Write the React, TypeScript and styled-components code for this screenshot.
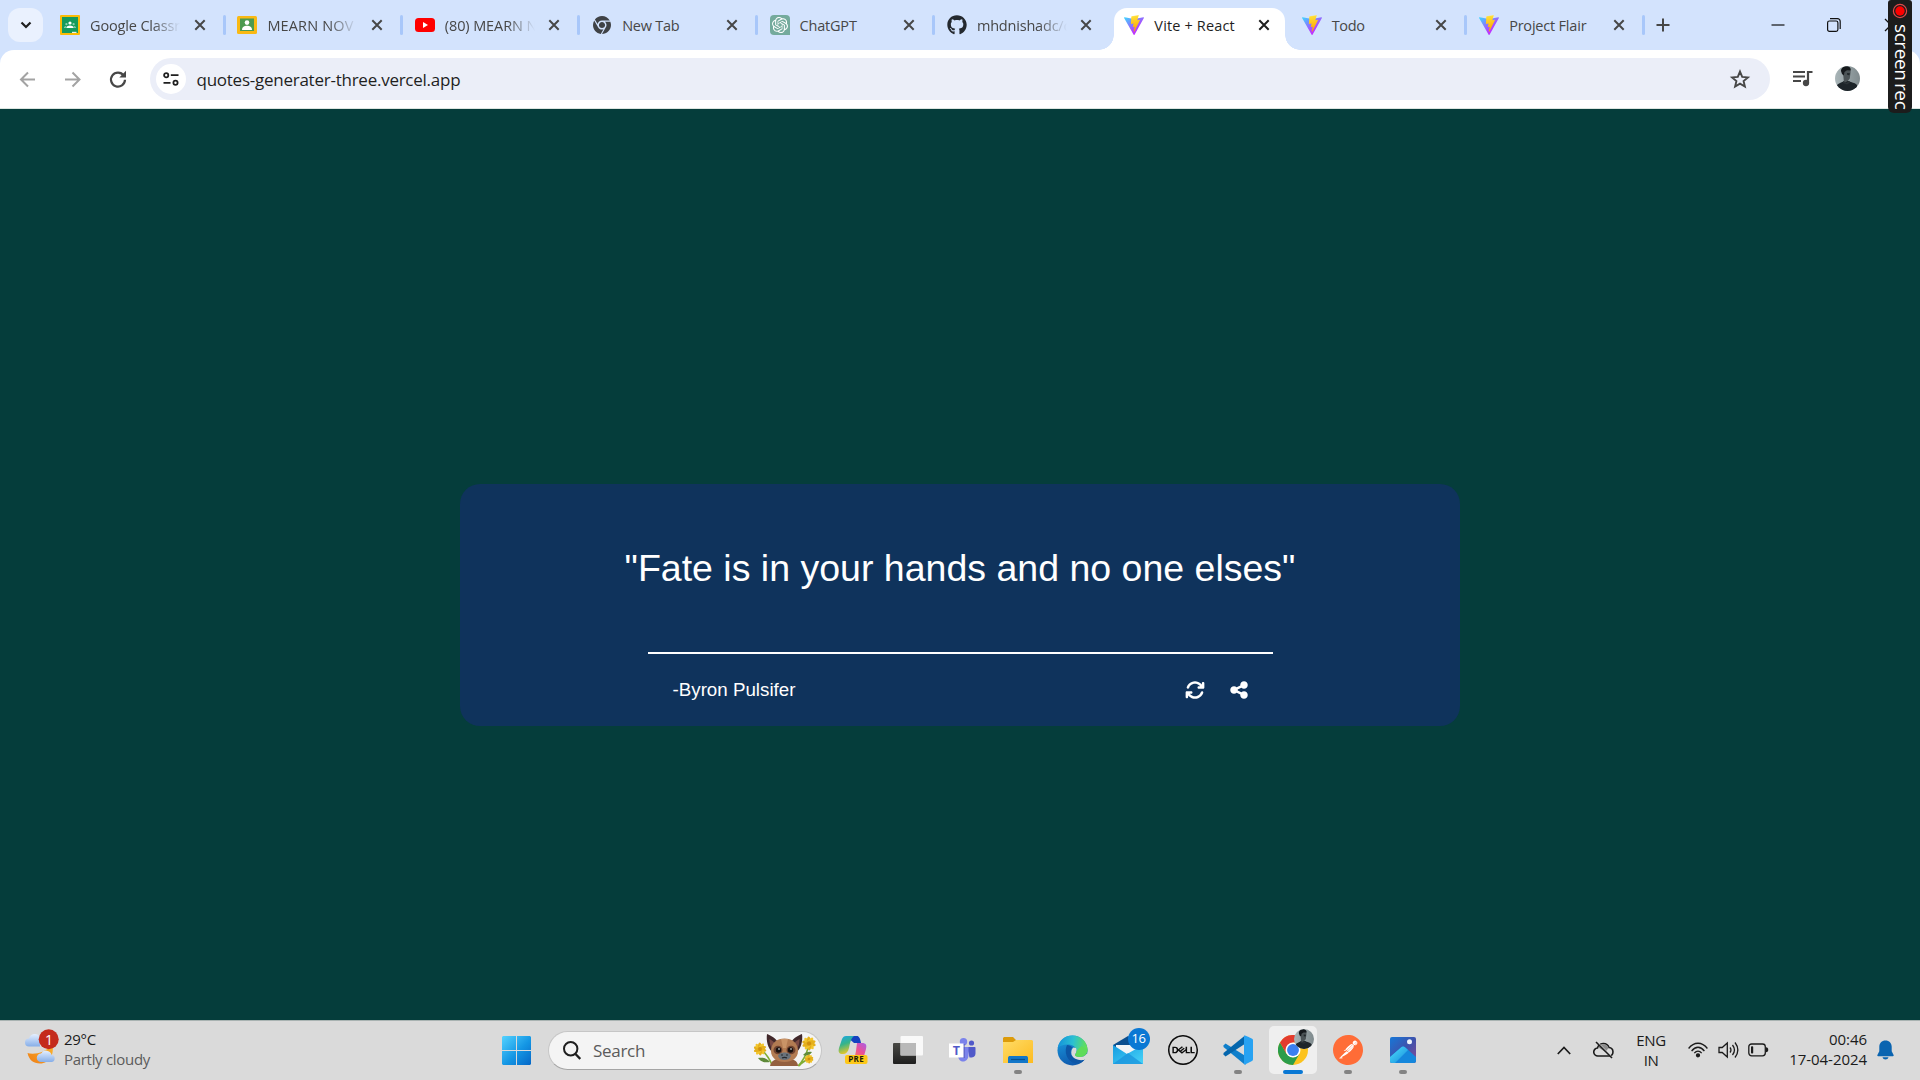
import React from "react";
import styled, { createGlobalStyle, css } from "styled-components";
import { FaGithub } from "react-icons/fa";
import { FaArrowsRotate, FaShareNodes, FaChrome } from "react-icons/fa6";
import { SiOpenai, SiDell, SiPostman } from "react-icons/si";

const uiFont = `"Segoe UI", "Open Sans", "Noto Sans", sans-serif`;

const GlobalStyle = createGlobalStyle`
  *, *::before, *::after { box-sizing: border-box; }
  body { margin: 0; background: #053d3b; overflow: hidden; }
  svg { display: block; flex: none; }
`;

const Screen = styled.div`
  position: relative;
  display: flex;
  flex-direction: column;
  width: 1920px;
  height: 1080px;
  overflow: hidden;
  background: #d3e3fd;
  font-family: ${uiFont};
`;

/* ---------- tab strip ---------- */
const TabStrip = styled.header`
  display: flex;
  flex: none;
  height: 50px;
  padding-left: 8px;
  background: #d3e3fd;
`;

const TabSearch = styled.button`
  display: grid;
  place-items: center;
  width: 35px;
  height: 34px;
  margin: 8px 7px 0 0;
  padding: 0;
  border: 0;
  border-radius: 12px;
  background: #eaf1fe;
`;

const TabCell = styled.div<{ $active?: boolean }>`
  position: relative;
  display: flex;
  align-items: center;
  width: 177.4px;
  height: 42px;
  margin-top: 8px;
  padding: 0 0 8px 10px;
  color: ${(p) => (p.$active ? "#1f1f1f" : "#474747")};
  ${(p) =>
    p.$active &&
    css`
      width: 171px;
      margin-right: 6.4px;
      border-radius: 13px 13px 0 0;
      background: #fff;
      &::before,
      &::after {
        content: "";
        position: absolute;
        bottom: 0;
        width: 15px;
        height: 15px;
      }
      &::before {
        left: -15px;
        background: radial-gradient(circle at 0 0, transparent 14.5px, #fff 15px);
      }
      &::after {
        right: -15px;
        background: radial-gradient(circle at 100% 0, transparent 14.5px, #fff 15px);
      }
    `}
`;

const Favicon = styled.span`
  display: grid;
  place-items: center;
  width: 20px;
  height: 20px;
  margin-right: 10px;
`;

const TabTitle = styled.span<{ $fade?: boolean; $spacing?: number }>`
  width: 90px;
  margin-right: 11.5px;
  padding-top: 1px;
  white-space: nowrap;
  font-size: 14.5px;
  line-height: 20px;
  letter-spacing: ${(p) => p.$spacing ?? -0.2}px;
  ${(p) => p.$fade && css`mask-image: linear-gradient(to right, #000 62px, transparent 90px);`}
`;

const Separator = styled.i`
  width: 3px;
  height: 20px;
  margin-left: 15px;
  border-radius: 2px;
  background: #a8c7fa;
`;

const NewTab = styled.div`
  width: 32px;
  padding: 18px 0 0 9px;
`;

const WindowControls = styled.div`
  display: flex;
  align-items: center;
  gap: 42px;
  margin: -1px 0 0 92px;
`;

/* ---------- toolbar ---------- */
const Toolbar = styled.div`
  display: flex;
  align-items: center;
  flex: none;
  height: 59px;
  padding: 0 60px 1px 18px;
  border-radius: 14px 14px 0 0;
  border-bottom: 1px solid #dce5e0;
  background: #fff;
  color: #474747;
`;

const NavIcons = styled.div`
  display: flex;
  align-items: center;
  gap: 24px;
  width: 132px;
`;

const AddressBar = styled.div`
  display: flex;
  align-items: center;
  width: 1620px;
  height: 42px;
  padding: 0 18px 0 6px;
  border-radius: 21px;
  background: #ebeef8;
`;

const SiteChip = styled.span`
  display: grid;
  place-items: center;
  width: 30px;
  height: 30px;
  margin-right: 10.5px;
  border-radius: 50%;
  background: #fff;
`;

const Url = styled.span`
  flex: 1;
  padding-top: 2px;
  color: #1f1f1f;
  font-size: 17px;
  line-height: 24px;
  letter-spacing: -0.25px;
`;

const ToolbarEnd = styled.div`
  display: flex;
  align-items: center;
  margin-left: 21px;
  gap: 20px;
`;

/* ---------- recorder badge ---------- */
const Recorder = styled.div`
  position: absolute;
  top: 0;
  left: 1888px;
  display: flex;
  flex-direction: column;
  align-items: center;
  width: 24px;
  height: 113px;
  padding-top: 3px;
  border-radius: 3px 3px 6px 6px;
  background: #1c1c1c;
`;

const RecorderText = styled.span`
  margin: 5px 0 0 3px;
  writing-mode: vertical-rl;
  color: #fff;
  font-family: "Open Sans", sans-serif;
  font-size: 19px;
  font-weight: 500;
  line-height: 22px;
  letter-spacing: -0.4px;
  white-space: nowrap;
`;

const Syllable = styled.span`
  margin-top: 2px;
  display: inline-block;
`;

/* ---------- page ---------- */
const Page = styled.main`
  display: flex;
  flex: 1;
  justify-content: center;
  align-items: flex-start;
  padding-top: 375px;
  background: #053d3b;
  font-family: Arial, "Liberation Sans", sans-serif;
  color: #fff;
`;

const Card = styled.section`
  display: flex;
  flex-direction: column;
  align-items: center;
  width: 1000px;
  height: 242px;
  padding-top: 63px;
  border-radius: 20px;
  background: #0f335c;
`;

const Quote = styled.p`
  margin: 0;
  font-size: 37.5px;
  line-height: 43px;
  white-space: nowrap;
`;

const Rule = styled.hr`
  width: 625px;
  height: 2px;
  margin: 62px 0 0;
  border: 0;
  background: #fff;
`;

const CardFooter = styled.footer`
  display: flex;
  align-items: center;
  justify-content: space-between;
  width: 625px;
  height: 72px;
  padding: 0 24px 0 25px;
  font-size: 18.75px;
`;

const Actions = styled.div`
  display: flex;
  gap: 24px;
  padding-bottom: 1px;
`;

/* ---------- taskbar ---------- */
const Taskbar = styled.footer`
  display: flex;
  align-items: center;
  flex: none;
  height: 60px;
  border-top: 1px solid #a9b3b2;
  background: #dadada;
  color: #1b1b1b;
  font-size: 15px;
`;

const Weather = styled.div`
  display: flex;
  align-items: center;
  width: 502px;
  padding: 0 0 3px 24px;
`;

const WeatherText = styled.div`
  display: flex;
  flex-direction: column;
  margin-left: 4px;
  line-height: 20px;
  letter-spacing: -0.3px;
`;

const Muted = styled.span`
  color: #5c5c5c;
`;

const SearchPill = styled.div`
  display: flex;
  align-items: center;
  width: 274px;
  height: 39px;
  margin: 0 3px 1px 17px;
  padding: 0 4px 0 14px;
  border: 1px solid #c6c6c6;
  border-bottom-color: #a5a5a5;
  border-radius: 20px;
  background: #f4f4f4;
`;

const SearchLabel = styled.span`
  flex: 1;
  margin-left: 12px;
  color: #5b5b5b;
  font-size: 17px;
  letter-spacing: -0.3px;
`;

const AppCell = styled.div<{ $active?: boolean; $running?: boolean }>`
  position: relative;
  display: grid;
  place-items: center;
  flex: none;
  width: 48px;
  height: 48px;
  margin: -1px 3.5px 0;
  border-radius: 5px;
  background: ${(p) => (p.$active ? "#efefef" : "transparent")};
  ${(p) =>
    p.$running &&
    css`
      &::after {
        content: "";
        position: absolute;
        bottom: 0;
        left: 50%;
        width: ${p.$active ? 20 : 8}px;
        height: 4px;
        border-radius: 2px;
        background: ${p.$active ? "#0a78d4" : "#838383"};
        transform: translateX(-50%);
      }
    `}
`;

const CountBadge = styled.span`
  position: absolute;
  top: 2px;
  right: 2px;
  width: 22px;
  height: 22px;
  border-radius: 50%;
  background: #0a78d4;
  color: #fff;
  font-size: 13px;
  line-height: 21px;
  letter-spacing: -0.5px;
  text-align: center;
`;

const AvatarBadge = styled.span`
  position: absolute;
  top: 3px;
  right: 3px;
`;

const Tray = styled.div`
  display: flex;
  align-items: center;
  margin-left: auto;
  padding: 0 16px 1px 0;
`;

const TrayCell = styled.div<{ $w: number }>`
  display: grid;
  place-items: center;
  width: ${(p) => p.$w}px;
`;

const TrayText = styled.div<{ $w: number; $align: "center" | "right"; $gapAfter?: number; $spacing?: number }>`
  width: ${(p) => p.$w}px;
  margin-right: ${(p) => p.$gapAfter ?? 0}px;
  padding-bottom: ${(p) => (p.$align === "right" ? 2 : 0)}px;
  text-align: ${(p) => p.$align};
  line-height: 20px;
  letter-spacing: ${(p) => p.$spacing ?? -0.4}px;
  white-space: nowrap;
`;

/* ---------- drawings ---------- */
const ViteLogo = ({ id }: { id: string }) => (
  <svg width="20" height="20" viewBox="0 0 256 257">
    <defs>
      <linearGradient id={`${id}a`} x1="-.8%" x2="57.6%" y1="7.7%" y2="78.4%">
        <stop offset="0" stopColor="#41d1ff" />
        <stop offset="1" stopColor="#bd34fe" />
      </linearGradient>
      <linearGradient id={`${id}b`} x1="43.4%" x2="50.3%" y1="2.2%" y2="89%">
        <stop offset="0" stopColor="#ffea83" />
        <stop offset=".083" stopColor="#ffdd35" />
        <stop offset="1" stopColor="#ffa800" />
      </linearGradient>
    </defs>
    <path fill={`url(#${id}a)`} d="M255.153 37.938L134.897 252.976c-2.483 4.44-8.862 4.466-11.382.048L.875 37.958c-2.746-4.814 1.371-10.646 6.827-9.67l120.385 21.517a6.537 6.537 0 0 0 2.322-.004l117.867-21.483c5.438-.991 9.574 4.796 6.877 9.62Z" />
    <path fill={`url(#${id}b)`} d="M185.432.063L96.44 17.501a3.268 3.268 0 0 0-2.634 3.014l-5.474 92.456a3.268 3.268 0 0 0 3.997 3.378l24.777-5.718c2.318-.535 4.413 1.507 3.936 3.838l-7.361 36.047c-.495 2.426 1.782 4.5 4.151 3.78l15.304-4.649c2.372-.72 4.652 1.36 4.15 3.788l-11.698 56.621c-.732 3.542 3.979 5.473 5.943 2.437l1.313-2.028l72.516-144.72c1.215-2.423-.88-5.186-3.54-4.672l-25.505 4.922c-2.396.462-4.435-1.77-3.759-4.114l16.646-57.705c.677-2.35-1.37-4.583-3.769-4.113Z" />
  </svg>
);

const ClassroomLogo = () => (
  <svg width="20" height="20" viewBox="0 0 20 20">
    <rect width="20" height="20" rx="1" fill="#fbbc05" />
    <rect x="2" y="2" width="16" height="16" fill="#159b5b" />
    <path d="M12 16.8h4.5v1.2H12z" fill="#e9f3ee" />
    <circle cx="10" cy="8" r="1.6" fill="#fff" />
    <circle cx="6.4" cy="9.2" r="1.1" fill="#8fd0b0" />
    <circle cx="13.6" cy="9.2" r="1.1" fill="#8fd0b0" />
    <path d="M6.2 13c.4-1.9 2-2.6 3.8-2.6s3.400.7 3.800 2.600z" fill="#fff" />
    <path d="M4 13c0-1.500 1-2.200 2.500-2.100L5.600 13zM16 13c0-1.500-1-2.200-2.500-2.100l.9 2.100z" fill="#8fd0b0" />
  </svg>
);

const ClassLogo = () => (
  <svg width="20" height="18" viewBox="0 0 20 18">
    <rect width="20" height="18" rx="1.500" fill="#f9b914" />
    <rect x="3" y="2.500" width="14" height="12.500" fill="#4d9a50" />
    <circle cx="10" cy="6.600" r="2.300" fill="#fff" />
    <path d="M5 14c0-3 2.300-4.200 5-4.200s5 1.200 5 4.200z" fill="#fff" />
  </svg>
);

const YoutubeLogo = () => (
  <svg width="20" height="14" viewBox="0 0 20 14">
    <rect width="20" height="14" rx="3.500" fill="#f00" />
    <path d="M8 4l5 3-5 3z" fill="#fff" />
  </svg>
);

const GptBox = styled.span`
  display: grid;
  place-items: center;
  width: 20px;
  height: 20px;
  border-radius: 4px 4px 0 4px;
  background: #74aa9c;
  color: #fff;
`;

const Cross = ({ color = "#474747" }: { color?: string }) => (
  <svg width="16" height="16" viewBox="0 0 16 16" stroke={color} strokeWidth="2">
    <path d="M3.300 3.300l9.400 9.400M12.700 3.300l-9.400 9.400" />
  </svg>
);

const Reload = () => (
  <svg width="24" height="24" viewBox="0 0 24 24">
    <path d="M17.700 8.500A7 7 0 1 0 19 12.800" fill="none" stroke="#474747" strokeWidth="2.200" />
    <path d="M20 3.800v6.700h-6.700z" fill="#474747" />
  </svg>
);

const Star = () => (
  <svg width="24" height="24" viewBox="0 0 24 24" fill="none" stroke="#474747" strokeWidth="1.900">
    <path d="M12 4.600l2.200 5.300 5.700.5-4.300 3.700 1.300 5.500-4.900-3-4.900 3 1.300-5.500-4.300-3.700 5.700-.5z" />
  </svg>
);

const Portrait = ({ size, id }: { size: number; id: string }) => (
  <svg width={size} height={size} viewBox="0 0 25 25">
    <defs>
      <clipPath id={id}><circle cx="12.500" cy="12.500" r="12.500" /></clipPath>
      <linearGradient id={`${id}g`}>
        <stop offset="0" stopColor="#a9b5b8" />
        <stop offset="1" stopColor="#7f8a8d" />
      </linearGradient>
    </defs>
    <g clipPath={`url(#${id})`}>
      <path fill={`url(#${id}g)`} d="M0 0h25v25H0z" />
      <path d="M2 19c2-2 5-2.500 7-4h5c2 1.500 6 1.500 8 4v6H2z" fill="#1d2429" />
      <path d="M8 6c0-3 2-5 4.500-5C15 1 16 3 15.600 6l-.8 6.500-2 2.500-3.800 2z" fill="#4b5356" />
      <path d="M6 5c0-3 3-5 6-4.700 3 .3 4.200 2.300 3.500 4.200L12 4.300 9.500 6 8.800 9.500 7 8z" fill="#15191c" />
      <path d="M12 7l3 .3-.7 2-2-.2z" fill="#20272a" />
      <path d="M8.500 15l3 2 2.500-2 1 1.500-3 2-4-1.500z" fill="#2c3337" />
    </g>
  </svg>
);

const WeatherIcon = () => (
  <svg width="36" height="40" viewBox="0 0 36 40">
    <defs>
      <linearGradient id="cloud" x2="0" y2="1"><stop stopColor="#e4efff" /><stop offset="1" stopColor="#86aee8" /></linearGradient>
      <linearGradient id="moon" x1="1" x2="0" y2="1"><stop stopColor="#fbb62d" /><stop offset="1" stopColor="#ee7d16" /></linearGradient>
    </defs>
    <path d="M3.500 24c6 2 19 0 24.500-9 3 9-2 19.500-12 19.500C9.500 34.500 5 31 3.500 24z" fill="url(#moon)" />
    <path d="M5 17.500a4 4 0 0 1 0-8 6 6 0 0 1 11-1.500v9.500z" fill="url(#cloud)" />
    <path d="M17 33a4.200 4.200 0 0 1 0-8.500 5.800 5.800 0 0 1 10.600 1.300A3.700 3.700 0 0 1 28 33z" fill="url(#cloud)" />
    <circle cx="24.700" cy="10.300" r="10" fill="#c42b1c" />
    <text x="25" y="15.500" fill="#fff" fontSize="14" fontWeight="500" textAnchor="middle" fontFamily="Open Sans">1</text>
  </svg>
);

const StartLogo = () => (
  <svg width="29" height="29" viewBox="0 0 29 29">
    <defs><linearGradient id="win" x2="1" y2="1"><stop stopColor="#55d3ff" /><stop offset=".55" stopColor="#1496e4" /><stop offset="1" stopColor="#0566c6" /></linearGradient></defs>
    <path fill="url(#win)" d="M1 0h13v14H0V1zM15 0h13l1 1v13H15zM0 15h14v14H1l-1-1zM15 15h14v13l-1 1H15z" />
  </svg>
);

const Magnifier = () => (
  <svg width="18" height="19" viewBox="0 0 18 19" fill="none" stroke="#1f1f1f">
    <circle cx="7.700" cy="7.700" r="6.700" strokeWidth="2" />
    <path d="M12.500 13l4.800 5" strokeWidth="2.400" />
  </svg>
);

const Petals = ({ x, y, r }: { x: number; y: number; r: number }) => (
  <g transform={`translate(${x} ${y})`}>
    {[0, 36, 72, 108, 144].map((a, i) => (
      <ellipse key={a} rx={r} ry={r * 0.34} fill={i % 2 ? "#f3c62c" : "#e5b01c"} transform={`rotate(${a + 15})`} />
    ))}
    <circle r={r * 0.3} fill="#d08f0d" />
  </g>
);

const BatAndFlowers = () => (
  <svg width="63" height="33" viewBox="0 0 63 33">
    <g fill="none" stroke="#7fae35" strokeWidth="1.600">
      <path d="M8 16c4 4 8 9 10 15M54 14c-2 8-5 13-10 18M56 24c-4 2-8 4-11 8" />
    </g>
    <path d="M4 24c5-1 9 0 12 4-5 1-9 0-12-4zM49 21c2-3 6-4 9-3-2 3-5 5-9 3z" fill="#5f8a3a" />
    <Petals x={6} y={15} r={6.500} />
    <Petals x={55} y={9.500} r={7} />
    <Petals x={55} y={25} r={4.500} />
    <path d="M16 32c1-5 5-8 14-8s14 3 14 8z" fill="#94603f" />
    <path d="M13 0c5 2 10 5 11 9l-6 9c-4-4-6-11-5-18zM48 0c-5 2-10 5-11 9l6 9c4-4 6-11 5-18z" fill="#41282b" />
    <path d="M15.500 5c2 1 5 3 6 5l-3 6c-2-3-3-7-3-11zM45.500 5c-2 1-5 3-6 5l3 6c2-3 3-7 3-11z" fill="#7b4a45" />
    <path d="M17 17c0-8 6-12.500 13.500-12.500S44 9 44 17c0 7-6 11-13.500 11S17 24 17 17z" fill="#b27b52" />
    <path d="M27 5h7l-2 9h-3z" fill="#c99467" />
    <ellipse cx="24" cy="16" rx="4.500" ry="4.300" fill="#6f4330" />
    <ellipse cx="37" cy="16" rx="4.500" ry="4.300" fill="#6f4330" />
    <circle cx="24.500" cy="16" r="2.700" fill="#16100f" />
    <circle cx="36.500" cy="16" r="2.700" fill="#16100f" />
    <circle cx="25" cy="15" r=".8" fill="#fff" />
    <circle cx="37" cy="15" r=".8" fill="#fff" />
    <path d="M24 22c1-3 4-3.500 6.500-3.500S36 19 37 22c-1 3-4 4-6.500 4S25 25 24 22z" fill="#69727b" />
    <path d="M27 21h2M32 21h2M28 24c2-1 3-1 5 0" stroke="#262a30" strokeWidth="1.200" />
  </svg>
);

const Copilot = () => (
  <svg width="30" height="30" viewBox="0 0 30 30">
    <defs>
      <linearGradient id="cpA" x2=".3" y2="1"><stop stopColor="#1aa5e8" /><stop offset=".5" stopColor="#36b48a" /><stop offset="1" stopColor="#e3c62a" /></linearGradient>
      <linearGradient id="cpB" x1="1" x2=".3" y2="1"><stop stopColor="#a75ee8" /><stop offset=".5" stopColor="#ec4f95" /><stop offset="1" stopColor="#f88a4b" /></linearGradient>
    </defs>
    <path d="M8 1h11c2 0 3 2 4 7h-7z" fill="#1441c0" />
    <path d="M8 1h8c-3 2-4 7-5 12-1 4-3 6-6 6-4 0-5-2-4-6l3-9c1-2 2-3 4-3z" fill="url(#cpA)" />
    <path d="M19 8h5c4 0 5 2 4 6l-2 7c-1 3-3 5-6 5h-7c4-2 4-6 5-10z" fill="url(#cpB)" />
    <rect x="7" y="20" width="22.500" height="9" rx="2" fill="#fdc818" />
    <text x="18.200" y="27.400" fontSize="8" fontWeight="700" textAnchor="middle" fill="#201b08" fontFamily="Open Sans" letterSpacing=".4">PRE</text>
  </svg>
);

const TaskView = () => (
  <svg width="30" height="28" viewBox="0 0 30 28">
    <defs><linearGradient id="tvd" x2="0" y2="1"><stop stopColor="#4a4a46" /><stop offset="1" stopColor="#1f1f1f" /></linearGradient></defs>
    <rect y="7" width="23" height="21" rx="1" fill="url(#tvd)" />
    <rect x="7.500" width="22.500" height="19.500" rx="1" fill="#fff" opacity=".82" />
    <path d="M7.500 7H23v12.500H7.500z" fill="#b9b9b9" />
  </svg>
);

const Teams = () => (
  <svg width="27" height="24" viewBox="0 0 27 24">
    <circle cx="14.500" cy="3.700" r="3.700" fill="#7b83eb" />
    <circle cx="22.500" cy="5" r="2.600" fill="#5059c9" />
    <path d="M18 9h7.500c.6 0 1 .4 1 1v5c0 4-3 5-6 4.500z" fill="#5059c9" />
    <path d="M9 9h10.500v8c0 4-2.500 6.500-5.500 6.500S9 21 9 17z" fill="#7b83eb" />
    <path d="M14 6h2v14h-5z" fill="#4a4faf" opacity=".5" />
    <rect y="5.500" width="14.500" height="14" fill="#fff" />
    <text x="7.300" y="17" fontSize="12.500" fontWeight="700" textAnchor="middle" fill="#5059c9" fontFamily="Open Sans">T</text>
  </svg>
);

const Explorer = () => (
  <svg width="30" height="27" viewBox="0 0 30 27">
    <defs><linearGradient id="fold" x2="1" y2="1"><stop stopColor="#ffdc67" /><stop offset="1" stopColor="#fdbb20" /></linearGradient></defs>
    <path d="M1 0h9l3 3h11v6H0V1z" fill="#dc9b0b" />
    <path d="M0 5h10l3-2h16l1 1v22H0z" fill="url(#fold)" />
    <path d="M5 26v-5c0-1.500 1-2 2-2h16c1 0 2 .5 2 2v5z" fill="#1377c9" />
    <path d="M8 22.500h14" stroke="#07508f" strokeWidth="1.200" />
  </svg>
);

const Edge = () => (
  <svg width="31" height="31" viewBox="0 0 31 31">
    <defs>
      <linearGradient id="eA" x1="0" y1=".4" x2="1" y2=".5"><stop stopColor="#1492da" /><stop offset=".5" stopColor="#2bc0d2" /><stop offset="1" stopColor="#67e34c" /></linearGradient>
      <linearGradient id="eB" x2=".3" y2="1"><stop stopColor="#1ba0e2" /><stop offset="1" stopColor="#0f5cb0" /></linearGradient>
    </defs>
    <circle cx="15.500" cy="15.500" r="15" fill="url(#eB)" />
    <path d="M.7 13C2 5 8 .5 15.500.5 24 .5 30.500 7 30.500 14.500c0 5-4 7.500-8 7.500-3 0-5-1-4.500-2.500 1-1 1.500-2 1.500-3.500 0-4-4-6.500-9-6.500-4 0-8 1.500-9.800 3.500z" fill="url(#eA)" />
    <path d="M10 10c-3 6-1 16 8.500 18.500 4 .7 8-1.500 10-5-5 2-12.500 1.500-14.500-4-1-3 0-5.500 1.500-7-1.500-1.500-3.500-2.500-5.500-2.500z" fill="#0d56a6" />
    <path d="M19 13c1 2 .7 4.500-1 6.500-.3 1.500 2 2.500 4.500 2.500 3 0 6-1 7.300-3.500l1.200 4.500-2 1c-4 2.500-12.500 1-14.500-4.500-.8-3 .5-6 2-7z" fill="#dadada" />
    <path d="M30.500 14.500c0 5-4 7.500-8 7.500-3 0-5-1-4.500-2.500 1-1 1.500-2 1.500-3.500l5-5z" fill="#5edc5a" />
  </svg>
);

const Mail = () => (
  <svg width="30" height="28" viewBox="0 0 30 28">
    <defs><linearGradient id="ml" x2="1" y2="1"><stop stopColor="#159be0" /><stop offset="1" stopColor="#48d4f8" /></linearGradient></defs>
    <path d="M0 9L15 0l15 9v6H0z" fill="#0b4f8f" />
    <path d="M3 9h24v7l-12 8L3 16z" fill="#f2f4f6" />
    <path d="M0 9l14 9 16-9v19H0z" fill="url(#ml)" />
    <path d="M0 28L15 17l15 11z" fill="#1b93dc" opacity=".75" />
  </svg>
);

const VsCode = () => (
  <svg width="30" height="30" viewBox="0 0 30 30">
    <path d="M2.500 8.500L.5 10.500v1.500L21 29l2 .5L22.500 21z" fill="#0f7fcb" />
    <path d="M22 .5L.5 18v1.500l2 2L22.500 8.500z" fill="#0466ad" />
    <path d="M22 .5c.5 0 7 3 7.500 3.500s.5 1 .5 2V24c0 1-.2 1.500-1 2l-7 3.500c-.8.200-1 0-1-1V1.500C21 .5 21.500.5 22 .5z" fill="#27a2f2" />
  </svg>
);

const Chrome = () => (
  <svg width="30" height="30" viewBox="0 0 48 48">
    <circle cx="24" cy="24" r="24" fill="#fcc31e" />
    <path d="M3.200 12L13.600 30 24 36l10.400-6L24 48A24 24 0 0 1 3.200 12z" fill="#2b9d4a" />
    <path d="M24 12h20.800A24 24 0 0 0 3.200 12l10.400 18z" fill="#e33b2e" />
    <circle cx="24" cy="24" r="12" fill="#fff" />
    <circle cx="24" cy="24" r="9.500" fill="#3a7ff0" />
  </svg>
);

const PostmanDisc = styled.span`
  display: grid;
  place-items: center;
  width: 30px;
  height: 30px;
  border-radius: 50%;
  background: radial-gradient(circle, #fff 60%, transparent 62%);
  color: #ff6c37;
`;

const Photos = () => (
  <svg width="26" height="26" viewBox="0 0 26 26">
    <defs>
      <linearGradient id="phA" x2="1" y2="1"><stop stopColor="#1678d8" /><stop offset=".5" stopColor="#3d53ad" /><stop offset="1" stopColor="#8a4a95" /></linearGradient>
      <linearGradient id="phB" x2="1" y2="1"><stop stopColor="#4fe0fb" /><stop offset="1" stopColor="#1489dc" /></linearGradient>
    </defs>
    <rect width="26" height="26" rx="2" fill="url(#phA)" />
    <path d="M0 20l11-9.500c1.500-1.500 3-1.500 4.500 0L26 20v4c0 1-1 2-2 2H2c-1 0-2-1-2-2z" fill="#1587dc" />
    <path d="M0 20l11-9.500c1.300-1.200 2.800-1.200 4.200 0L18 13 5 26H2c-1 0-2-1-2-2z" fill="url(#phB)" />
    <circle cx="19.500" cy="4.700" r="2.500" fill="#eef4fc" />
  </svg>
);

const CloudOff = () => (
  <svg width="21" height="18" viewBox="0 0 21 18">
    <path d="M5 15a4 4 0 0 1-.5-8A6 6 0 0 1 16 6.500a4.300 4.300 0 0 1 .5 8.500z" fill="#dcdcdc" stroke="#1b1b1b" strokeWidth="1.600" />
    <path d="M5.500 6.500C8 2 14.500 2.500 15.500 7L12.500 11z" fill="#8c8c8c" />
    <path d="M4 1l15.500 16" stroke="#dadada" strokeWidth="1.500" />
    <path d="M3 1l16 16" stroke="#1b1b1b" strokeWidth="1.600" />
  </svg>
);

const Wifi = () => (
  <svg width="20" height="16" viewBox="0 0 20 16" fill="none" stroke="#1b1b1b" strokeWidth="1.300">
    <path d="M.6 6.500C6-.5 14-.5 19.400 6.500M3.600 9C7.500 4 12.500 4 16.400 9M6.300 11.200c2.300-2.700 5.100-2.700 7.400 0" />
    <circle cx="10" cy="13.300" r="1.500" fill="#1b1b1b" />
  </svg>
);

const Speaker = () => (
  <svg width="21" height="18" viewBox="0 0 21 18" fill="none" stroke="#1b1b1b" strokeWidth="1.300">
    <path d="M1 6.500h3.200L9.300 2v14l-5.100-4.500H1z" />
    <path d="M12 6.500c1.300 1.700 1.300 3.300 0 5M14.500 4c2.600 3.300 2.600 6.700 0 10M17 1.500c3.800 5 3.800 10 0 15" />
  </svg>
);

const Battery = () => (
  <svg width="21" height="14" viewBox="0 0 21 14">
    <rect x=".8" y="1" width="16.500" height="11.800" rx="2.800" fill="none" stroke="#1b1b1b" strokeWidth="1.300" />
    <rect x="3" y="3.300" width="2.200" height="7.200" rx=".8" fill="#1b1b1b" />
    <path d="M18 4.300c3 0 3 5 0 5z" fill="#1b1b1b" />
  </svg>
);

const Bell = () => (
  <svg width="17" height="20" viewBox="0 0 17 20" fill="#0a64b0">
    <path d="M8.500.5c3.700 0 6.200 2.600 6.200 6.200v4.500l1.900 3.800c.3.700 0 1.200-.7 1.200H1.100c-.7 0-1-.5-.7-1.200l1.900-3.800V6.700C2.300 3.100 4.800.5 8.500.5zM5.500 17.300h6c-.5 1.500-1.600 2.200-3 2.200s-2.500-.7-3-2.200z" />
  </svg>
);

type TabInfo = { title: string; icon: React.ReactNode; fade?: boolean; active?: boolean; line?: boolean; spacing?: number };

const tabs: TabInfo[] = [
  { title: "Google Classr", icon: <ClassroomLogo />, fade: true, line: true, spacing: -0.15 },
  { title: "MEARN NOV", icon: <ClassLogo />, fade: true, line: true, spacing: 0.15 },
  { title: "(80) MEARN N", icon: <YoutubeLogo />, fade: true, line: true, spacing: -0.1 },
  { title: "New Tab", icon: <FaChrome size={18} color="#3f4246" />, line: true, spacing: -0.25 },
  { title: "ChatGPT", icon: <GptBox><SiOpenai size={16} /></GptBox>, line: true },
  { title: "mhdnishadc/c", icon: <FaGithub size={20} color="#24292f" />, fade: true },
  { title: "Vite + React", icon: <ViteLogo id="v1" />, active: true, spacing: 0.15 },
  { title: "Todo", icon: <ViteLogo id="v2" />, line: true, spacing: -0.35 },
  { title: "Project Flair", icon: <ViteLogo id="v3" />, line: true },
];

const apps: { name: string; icon: React.ReactNode; running?: boolean; active?: boolean; extra?: React.ReactNode }[] = [
  { name: "copilot", icon: <Copilot /> },
  { name: "taskview", icon: <TaskView /> },
  { name: "teams", icon: <Teams /> },
  { name: "explorer", icon: <Explorer />, running: true },
  { name: "edge", icon: <Edge /> },
  { name: "mail", icon: <Mail />, extra: <CountBadge>16</CountBadge> },
  { name: "dell", icon: <SiDell size={30} color="#0c0c0c" /> },
  { name: "vscode", icon: <VsCode />, running: true },
  { name: "chrome", icon: <Chrome />, running: true, active: true, extra: <AvatarBadge><Portrait size={20} id="pf2" /></AvatarBadge> },
  { name: "postman", icon: <PostmanDisc><SiPostman size={30} /></PostmanDisc>, running: true },
  { name: "photos", icon: <Photos />, running: true },
];

export default function App() {
  return (
    <Screen>
      <GlobalStyle />
      <TabStrip>
        <TabSearch>
          <svg width="12" height="8" viewBox="0 0 12 8" fill="none" stroke="#1f1f1f" strokeWidth="2.200">
            <path d="M1.500 1.500L6 6l4.500-4.500" />
          </svg>
        </TabSearch>
        {tabs.map((t) => (
          <TabCell key={t.title} $active={t.active}>
            <Favicon>{t.icon}</Favicon>
            <TabTitle $fade={t.fade} $spacing={t.spacing}>{t.title}</TabTitle>
            <Cross color={t.active ? "#1f1f1f" : undefined} />
            {t.line && <Separator />}
          </TabCell>
        ))}
        <NewTab>
          <svg width="14" height="14" viewBox="0 0 14 14" stroke="#474747" strokeWidth="2">
            <path d="M7 .5v13M.5 7h13" />
          </svg>
        </NewTab>
        <WindowControls>
          <svg width="14" height="14" viewBox="0 0 14 14"><path d="M.5 7h13" stroke="#111" strokeWidth="1.200" /></svg>
          <svg width="14" height="14" viewBox="0 0 14 14" fill="none" stroke="#111" strokeWidth="1.200">
            <rect x=".6" y="3" width="10.300" height="10.300" rx="1.800" />
            <path d="M3 .7h7.500a2.700 2.700 0 0 1 2.700 2.700V11" />
          </svg>
          <svg width="16" height="14" viewBox="0 0 16 14" stroke="#111" strokeWidth="1.300"><path d="M2 1l12 12M2 13l12-12" /></svg>
        </WindowControls>
      </TabStrip>

      <Toolbar>
        <NavIcons>
          <svg width="20" height="20" viewBox="0 0 20 20" fill="none" stroke="#a3a3a3" strokeWidth="2"><path d="M17 10.500H3.500M10 3.500l-7 7 7 7" /></svg>
          <svg width="20" height="20" viewBox="0 0 20 20" fill="none" stroke="#a3a3a3" strokeWidth="2"><path d="M3 10.500h14M10.500 3.500l7 7-7 7" /></svg>
          <Reload />
        </NavIcons>
        <AddressBar>
          <SiteChip>
            <svg width="16" height="14" viewBox="0 0 16 14" fill="none" stroke="#1f1f1f" strokeWidth="1.800">
              <circle cx="3.200" cy="3.200" r="2.100" />
              <path d="M7.800 3.200H15.500M.5 10.800h7" />
              <circle cx="12.500" cy="10.800" r="2.100" />
            </svg>
          </SiteChip>
          <Url>quotes-generater-three.vercel.app</Url>
          <Star />
        </AddressBar>
        <ToolbarEnd>
          <svg width="24" height="20" viewBox="0 0 24 20" fill="none" stroke="#474747" strokeWidth="2.200">
            <path d="M2 3h12M2 7.500h12M2 12h8M21.500 3H17v11" />
            <circle cx="15" cy="14" r="2.400" fill="#474747" strokeWidth="1.500" />
          </svg>
          <Portrait size={25} id="pf1" />
        </ToolbarEnd>
      </Toolbar>

      <Page>
        <Card>
          <Quote>"Fate is in your hands and no one elses"</Quote>
          <Rule />
          <CardFooter>
            <span>-Byron Pulsifer</span>
            <Actions>
              <FaArrowsRotate size={20} />
              <FaShareNodes size={20} />
            </Actions>
          </CardFooter>
        </Card>
      </Page>

      <Taskbar>
        <Weather>
          <WeatherIcon />
          <WeatherText>
            <span>29°C</span>
            <Muted>Partly cloudy</Muted>
          </WeatherText>
        </Weather>
        <StartLogo />
        <SearchPill>
          <Magnifier />
          <SearchLabel>Search</SearchLabel>
          <BatAndFlowers />
        </SearchPill>
        {apps.map((a) => (
          <AppCell key={a.name} $active={a.active} $running={a.running}>
            {a.icon}
            {a.extra}
          </AppCell>
        ))}
        <Tray>
          <TrayCell $w={27}>
            <svg width="14" height="9" viewBox="0 0 14 9" fill="none" stroke="#1b1b1b" strokeWidth="1.700"><path d="M.8 8L7 1.500 13.200 8" /></svg>
          </TrayCell>
          <TrayCell $w={52}><CloudOff /></TrayCell>
          <TrayText $w={44} $align="center" $gapAfter={10}>ENG<br />IN</TrayText>
          <TrayCell $w={30}><Wifi /></TrayCell>
          <TrayCell $w={30}><Speaker /></TrayCell>
          <TrayCell $w={30}><Battery /></TrayCell>
          <TrayText $w={94} $align="right" $spacing={-0.05}>00:46<br />17-04-2024</TrayText>
          <TrayCell $w={37}><Bell /></TrayCell>
        </Tray>
      </Taskbar>

      <Recorder>
        <svg width="16" height="16" viewBox="0 0 16 16">
          <circle cx="8" cy="8" r="6.600" fill="none" stroke="#e04a4a" strokeWidth="1.200" />
          <circle cx="8" cy="8" r="4.700" fill="#f00" />
        </svg>
        <RecorderText>screen<Syllable>rec</Syllable></RecorderText>
      </Recorder>
    </Screen>
  );
}
